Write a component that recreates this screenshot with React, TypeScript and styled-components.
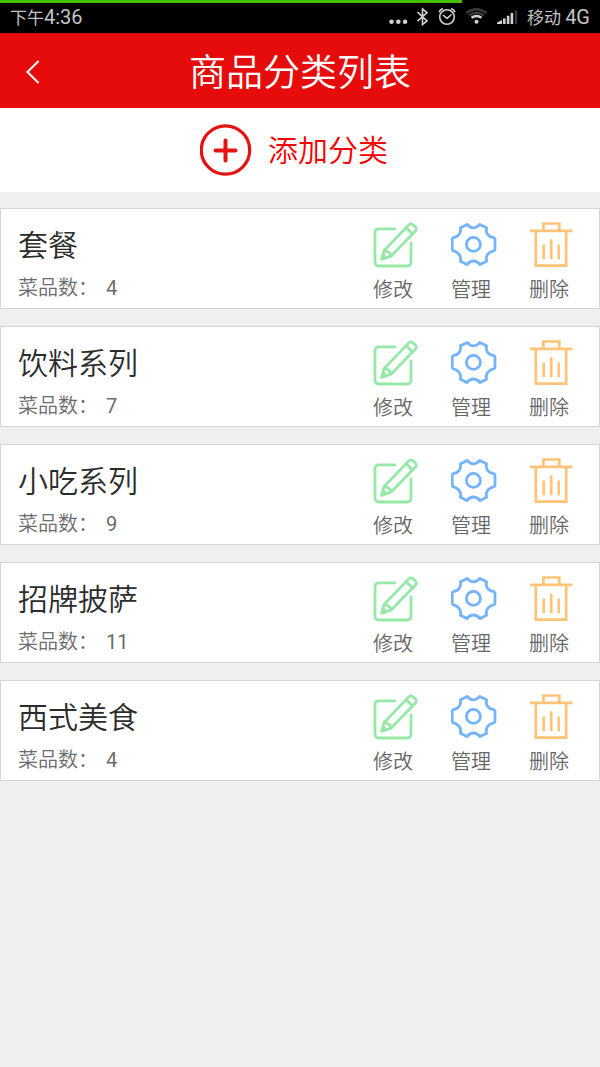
import React from "react";
import styled, { createGlobalStyle } from "styled-components";

const GlobalStyle = createGlobalStyle`
  * { box-sizing: border-box; }
  body {
    margin: 0;
    background: #efefef;
    font-family: Roboto, "Noto Sans CJK SC", sans-serif;
    font-weight: 350;
  }
  button {
    margin: 0;
    padding: 0;
    border: 0;
    background: none;
    font: inherit;
    cursor: pointer;
  }
  svg { display: block; flex: none; }
`;

const Page = styled.div`
  min-height: 100vh;
  background: #efefef;
`;

const Progress = styled.div`
  height: 3px;
  background: #000;
`;

const ProgressFill = styled.div<{ $percent: number }>`
  width: ${(p) => p.$percent}%;
  height: 100%;
  background: #45c000;
`;

const StatusBar = styled.div`
  display: flex;
  align-items: center;
  justify-content: space-between;
  height: 30px;
  padding: 0 10px 2px;
  background: #000;
  color: #c4c4c4;
  font-size: 17px;
  font-weight: 400;
  line-height: 28px;
`;

const Latin = styled.span`
  font-size: 20px;
`;

const StatusIcons = styled.div`
  display: flex;
  align-items: center;
  gap: 8px;
`;

const Header = styled.header`
  display: grid;
  grid-template-columns: 66px 1fr 66px;
  align-items: center;
  height: 75px;
  background: #e60c0c;
  color: #fff;
`;

const BackButton = styled.button`
  display: flex;
  align-items: center;
  justify-content: center;
  height: 75px;
`;

const Title = styled.h1`
  margin: 0;
  padding-top: 4px;
  font-size: 37px;
  font-weight: 350;
  line-height: 74px;
  text-align: center;
`;

const AddButton = styled.button`
  display: flex;
  align-items: center;
  justify-content: center;
  gap: 16px;
  width: 100%;
  height: 84px;
  padding-right: 12px;
  background: #fff;
  color: #f80000;
  font-size: 30px;
  line-height: 44px;
`;

const AddLabel = styled.span`
  padding-top: 2px;
`;

const List = styled.ul`
  display: flex;
  flex-direction: column;
  gap: 17px;
  margin: 0;
  padding: 16px 0;
  list-style: none;
`;

const Card = styled.li`
  display: flex;
  justify-content: space-between;
  height: 101px;
  padding: 13px 24px 0 17px;
  border: 1px solid #d4d4d4;
  background: #fff;
`;

const Name = styled.h2`
  margin: 0;
  padding-top: 1px;
  color: #2c2c2c;
  font-size: 30px;
  font-weight: 350;
  line-height: 46px;
`;

const Count = styled.p`
  display: flex;
  gap: 8px;
  margin: 0;
  padding-top: 4px;
  color: #6c6c6c;
  font-size: 20px;
  line-height: 30px;
`;

const Amount = styled.span`
  font-weight: 400;
`;

const Actions = styled.div`
  display: flex;
  gap: 32px;
`;

const Action = styled.button`
  display: flex;
  flex-direction: column;
  align-items: flex-start;
  gap: 7px;
  width: 46px;
  color: #666;
  font-size: 20px;
  line-height: 30px;
`;

const EditIcon = () => (
  <svg width="46" height="46" viewBox="0 0 46 46" fill="none" stroke="#96e8a6" strokeWidth="2.8" strokeLinecap="round" strokeLinejoin="round">
    <path d="M22 6.8H6Q2 6.8 2 10.8V40Q2 44 6 44H34Q38 44 38 40V21" />
    <path d="M8.6 37.4 11.2 28.4 36 2.8Q38 0.9 40 2.8L42.4 5.1Q44.4 7 42.5 9L18.2 34Z" />
    <path d="M33.2 5.8 39.6 12M11.2 28.4Q16.2 28.9 18.2 34" />
    <path d="M9.6 36.6 10.6 33.4 13 35.6Z" />
  </svg>
);

const GearIcon = () => (
  <svg width="46" height="46" viewBox="0 0 46 46" fill="none" stroke="#74b4ff" strokeWidth="2.8" strokeLinejoin="round">
    <path d="M16.3 2.4Q19 5.9 22.4 5.9T28.8 2.4L35.6 5.8Q34.6 10.2 36.9 12.8T42.6 15.5Q44 15.9 44 17.3V27.1Q44 28.5 42.6 28.9Q39.2 29.4 36.9 32.2T35.6 39.2L29 42.5Q26 39 22.4 39T15.9 42.5L9.4 39.2Q10.4 34.8 8 32.2T2.6 28.9Q1.2 28.5 1.2 27.1V17.3Q1.2 15.9 2.6 15.5Q5.8 15.2 8 12.8T9.4 5.8Z" />
    <circle cx="22.4" cy="22.4" r="7" />
  </svg>
);

const TrashIcon = () => (
  <svg width="46" height="46" viewBox="0 0 46 46" fill="none" stroke="#ffc477" strokeWidth="2.7">
    <path d="M1 8.8H43.4M14.4 8.8V1.5H30.3V8.8M6.8 8.8V43.6H37.2V8.8M14.7 22.5V37.3M22.2 17.3V37.3M29.7 22.5V37.3" />
  </svg>
);

const PlusIcon = () => (
  <svg width="52" height="52" viewBox="0 0 52 52" fill="none" stroke="#e41212">
    <circle cx="25.5" cy="26" r="24.2" strokeWidth="3.2" />
    <path d="M25.5 16.5V36.5M15.5 26.5H35.5" strokeWidth="4" strokeLinecap="round" />
  </svg>
);

const BackIcon = () => (
  <svg width="14" height="24" viewBox="0 0 14 24" fill="none" stroke="#fff" strokeWidth="2">
    <path d="M12.6 1 1.4 12 12.6 23" />
  </svg>
);

const PhoneIcons = () => (
  <svg width="130" height="22" viewBox="388 6 130 22" fill="none" stroke="#d0d0d0" strokeWidth="1.6">
    <g fill="#d0d0d0" stroke="none">
      <circle cx="390.5" cy="21.8" r="2.3" />
      <circle cx="397.3" cy="21.8" r="2.3" />
      <circle cx="404.1" cy="21.8" r="2.3" />
      <path d="M496 24V22.5L501 20V24ZM502 24V18.6H504.6V24ZM505.8 24V15.8H508.4V24ZM509.6 24V13H512.2V24Z" />
      <circle cx="475.5" cy="21.8" r="2" />
    </g>
    <path d="M416.5 12.2 426 21 421.5 24.5V9L426 12.6 416.5 21.2" />
    <circle cx="446" cy="17" r="7.3" />
    <path d="M442 15 446 18.4 450.5 14.5M438 12.2Q439 9.5 442 8.6M454 12.2Q453 9.5 450 8.6" />
    <path d="M470.5 17.8Q475.5 14 480.5 17.8" strokeWidth="2.4" />
    <path d="M465.5 13Q475.5 5.5 485.5 13M468 15.5Q475.5 10 483 15.5" stroke="#3a3a3a" strokeWidth="2.2" />
    <path d="M515 24V10.4" stroke="#3a3a3a" strokeWidth="2.4" />
  </svg>
);

const actions = [
  { label: "修改", Icon: EditIcon },
  { label: "管理", Icon: GearIcon },
  { label: "删除", Icon: TrashIcon },
];

const categories = [
  { name: "套餐", count: 4 },
  { name: "饮料系列", count: 7 },
  { name: "小吃系列", count: 9 },
  { name: "招牌披萨", count: 11 },
  { name: "西式美食", count: 4 },
];

export default function App() {
  return (
    <Page>
      <GlobalStyle />
      <Progress>
        <ProgressFill $percent={77} />
      </Progress>
      <StatusBar>
        <span>
          下午<Latin>4:36</Latin>
        </span>
        <StatusIcons>
          <PhoneIcons />
          <span>
            移动 <Latin>4G</Latin>
          </span>
        </StatusIcons>
      </StatusBar>
      <Header>
        <BackButton type="button" aria-label="返回">
          <BackIcon />
        </BackButton>
        <Title>商品分类列表</Title>
      </Header>
      <main>
        <AddButton type="button">
          <PlusIcon />
          <AddLabel>添加分类</AddLabel>
        </AddButton>
        <List>
          {categories.map(({ name, count }) => (
            <Card key={name}>
              <div>
                <Name>{name}</Name>
                <Count>
                  <span>菜品数：</span>
                  <Amount>{count}</Amount>
                </Count>
              </div>
              <Actions>
                {actions.map(({ label, Icon }) => (
                  <Action key={label} type="button">
                    <Icon />
                    {label}
                  </Action>
                ))}
              </Actions>
            </Card>
          ))}
        </List>
      </main>
    </Page>
  );
}
